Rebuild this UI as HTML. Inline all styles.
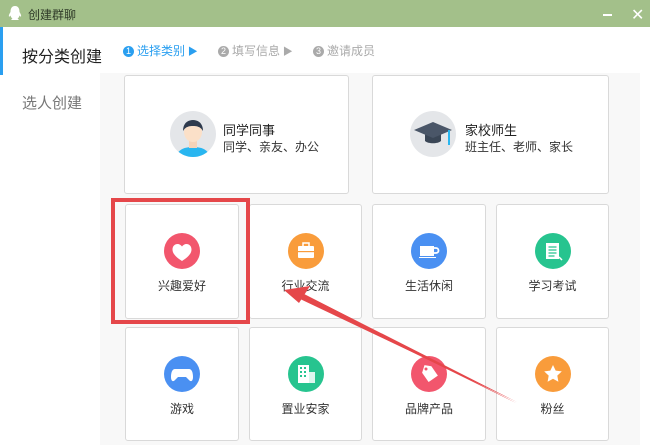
<!DOCTYPE html>
<html><head><meta charset="utf-8"><style>
*{margin:0;padding:0;box-sizing:border-box}
body{width:650px;height:445px;overflow:hidden;background:#fff;font-family:"Liberation Sans","Noto Sans CJK SC",sans-serif;position:relative;color:#333}
.title{position:absolute;left:0;top:0;width:650px;height:27px;background:#a3c08a}
.title span{position:absolute;left:28px;top:6px;font-size:12px;color:#2f3a28}
.abs{position:absolute}
.content{position:absolute;left:100px;top:73px;width:540px;height:372px;background:#f8f8f8}
.card{position:absolute;background:#fff;border:1px solid #d9d9d9;border-radius:3px}
.ic{position:absolute;width:36px;height:36px;border-radius:50%;left:50%;margin-left:-18px;top:28px}
.lb{position:absolute;left:0;right:0;text-align:center;font-size:12px;color:#333;top:72px}
.step{position:absolute;top:42px;font-size:12px;color:#aaa}
.num{display:inline-block;width:11px;height:11px;border-radius:50%;background:#aaa;color:#fff;font-size:9px;text-align:center;line-height:11px;vertical-align:1px;margin-right:3px}
</style></head><body>
<div class="title">
<svg class="abs" style="left:8px;top:5px" width="14" height="17" viewBox="0 0 14 17"><path d="M7 1C3.5 1 2.5 4 2.5 7c-1 1.5-2 3.5-1.5 4.5.5.5 1-.5 1.5-1 .3 1.5 1 2.5 2 3-1 .5-1.5 1-1 1.5h7c.5-.5 0-1-1-1.5 1-.5 1.7-1.5 2-3 .5.5 1 1.5 1.5 1 .5-1-.5-3-1.5-4.5C11.5 4 10.5 1 7 1z" fill="#fff"/></svg>
<span>创建群聊</span>
<div class="abs" style="left:603px;top:14px;width:9px;height:2px;background:#fff"></div>
<div class="abs" style="left:631px;top:5px;color:#fff;font-size:16px">✕</div>
</div>
<div class="abs" style="left:0;top:27px;width:3px;height:48px;background:#2a9ff0"></div>
<div class="abs" style="left:22px;top:43px;font-size:16px;color:#222">按分类创建</div>
<div class="abs" style="left:22px;top:92px;font-size:15px;color:#777">选人创建</div>
<div class="step" style="left:123px;color:#2a9ff0"><span class="num" style="background:#2a9ff0">1</span>选择类别<span style="font-size:10px"> ▶</span></div>
<div class="step" style="left:218px"><span class="num">2</span>填写信息<span style="font-size:10px"> ▶</span></div>
<div class="step" style="left:313px"><span class="num">3</span>邀请成员</div>
<div class="content"></div>

<div class="card" style="left:124px;top:75px;width:225px;height:119px">
 <svg class="abs" style="left:45px;top:35px" width="46" height="46" viewBox="0 0 46 46"><defs><clipPath id="c1"><circle cx="23" cy="23" r="23"/></clipPath></defs><circle cx="23" cy="23" r="23" fill="#e4e6e9"/><g clip-path="url(#c1)"><path d="M6 46c2-8 9-10 17-10s15 2 17 10z" fill="#29b6f0"/><rect x="19" y="28" width="8" height="9" fill="#f6d3b8"/><ellipse cx="23" cy="21" rx="9" ry="10" fill="#fbe0c8"/><path d="M13 20c0-8 5-11 10-11s10 3 10 11c-2-3-4-5-10-5s-8 2-10 5z" fill="#2e3a4d"/></g></svg>
 <div class="abs" style="left:98px;top:44px;font-size:13px;color:#222">同学同事</div>
 <div class="abs" style="left:98px;top:62px;font-size:12px;color:#333">同学、亲友、办公</div>
</div>
<div class="card" style="left:372px;top:75px;width:237px;height:119px">
 <svg class="abs" style="left:37px;top:35px" width="46" height="46" viewBox="0 0 46 46"><circle cx="23" cy="23" r="23" fill="#e4e6e9"/><path d="M15 22v8c3 3 13 3 16 0v-8z" fill="#3a4656"/><path d="M4 19l19-8 19 8-19 8z" fill="#4a5668"/><rect x="38" y="19" width="2" height="15" fill="#29b6f0"/></svg>
 <div class="abs" style="left:92px;top:44px;font-size:13px;color:#222">家校师生</div>
 <div class="abs" style="left:92px;top:62px;font-size:12px;color:#333">班主任、老师、家长</div>
</div>

<div class="card" style="left:125px;top:204px;width:114px;height:115px"><div class="ic" style="background:#f2566d"><svg width="36" height="36" viewBox="0 0 36 36"><path d="M18 28c-7-4.5-9.5-8-9.5-11.5 0-3.3 2.3-5.5 5-5.5 1.8 0 3.5 1 4.5 2.5 1-1.5 2.7-2.5 4.5-2.5 2.7 0 5 2.2 5 5.5 0 3.5-2.5 7-9.5 11.5z" fill="#fff"/></svg></div><div class="lb">兴趣爱好</div></div>
<div class="card" style="left:249px;top:204px;width:113px;height:115px"><div class="ic" style="background:#f99c3b"><svg width="36" height="36" viewBox="0 0 36 36"><rect x="10" y="13" width="16" height="12" rx="1" fill="#fff"/><rect x="15" y="10" width="6" height="4" fill="none" stroke="#fff" stroke-width="1.5"/><rect x="10" y="18" width="16" height="1.2" fill="#f99c3b"/></svg></div><div class="lb">行业交流</div></div>
<div class="card" style="left:372px;top:204px;width:114px;height:115px"><div class="ic" style="background:#4a90f2"><svg width="36" height="36" viewBox="0 0 36 36"><rect x="9" y="13" width="14" height="10" fill="#fff"/><path d="M23 15h2a2.5 2.5 0 010 5h-2" fill="none" stroke="#fff" stroke-width="1.8"/><rect x="8" y="24" width="17" height="1" fill="#fff"/></svg></div><div class="lb">生活休闲</div></div>
<div class="card" style="left:496px;top:204px;width:113px;height:115px"><div class="ic" style="background:#27c48f"><svg width="36" height="36" viewBox="0 0 36 36"><rect x="11" y="10" width="13" height="16" fill="#fff"/><g stroke="#27c48f" stroke-width="1.3"><path d="M13.5 14h8M13.5 17h8M13.5 20h8M13.5 23h6"/></g><path d="M24 24l3 3" stroke="#fff" stroke-width="1.5"/></svg></div><div class="lb">学习考试</div></div>

<div class="card" style="left:125px;top:327px;width:114px;height:114px"><div class="ic" style="background:#4a90f2;top:28px"><svg width="36" height="36" viewBox="0 0 36 36"><path d="M11 13h14c3 0 4 4 4 8 0 4-2 5-3.5 3.5L22 21h-8l-3.5 3.5C9 26 7 25 7 21c0-4 1-8 4-8z" fill="#fff"/></svg></div><div class="lb">游戏</div></div>
<div class="card" style="left:249px;top:327px;width:113px;height:114px"><div class="ic" style="background:#27c48f"><svg width="36" height="36" viewBox="0 0 36 36"><rect x="10" y="9" width="11" height="18" fill="#fff"/><rect x="21" y="16" width="6" height="11" fill="#fff" opacity=".85"/><g fill="#27c48f"><rect x="12" y="11" width="2" height="2"/><rect x="16" y="11" width="2" height="2"/><rect x="12" y="15" width="2" height="2"/><rect x="16" y="15" width="2" height="2"/><rect x="12" y="19" width="2" height="2"/><rect x="16" y="19" width="2" height="2"/></g></svg></div><div class="lb">置业安家</div></div>
<div class="card" style="left:372px;top:327px;width:114px;height:114px"><div class="ic" style="background:#f2566d"><svg width="36" height="36" viewBox="0 0 36 36"><path d="M12 10h7l8 8-8 8-8-8z" fill="#fff" transform="rotate(10 18 18)"/><circle cx="15" cy="13" r="1.5" fill="#f2566d"/></svg></div><div class="lb">品牌产品</div></div>
<div class="card" style="left:496px;top:327px;width:113px;height:114px"><div class="ic" style="background:#f99c3b"><svg width="36" height="36" viewBox="0 0 36 36"><path d="M18 9l2.7 5.6 6.1.8-4.5 4.2 1.1 6.1L18 22.8l-5.4 2.9 1.1-6.1-4.5-4.2 6.1-.8z" fill="#fff"/></svg></div><div class="lb">粉丝</div></div>

<div class="abs" style="left:111px;top:198px;width:139px;height:126px;border:4px solid #e5474a"></div>
<svg class="abs" style="left:0;top:0" width="650" height="445"><path d="M517 402L300 292 298 298z" fill="#e5474a"/><path d="M300 292 302 298 516 403z" fill="#e5474a"/><path d="M284 290l26-4-11 17z" fill="#e5474a"/></svg>
</body></html>
